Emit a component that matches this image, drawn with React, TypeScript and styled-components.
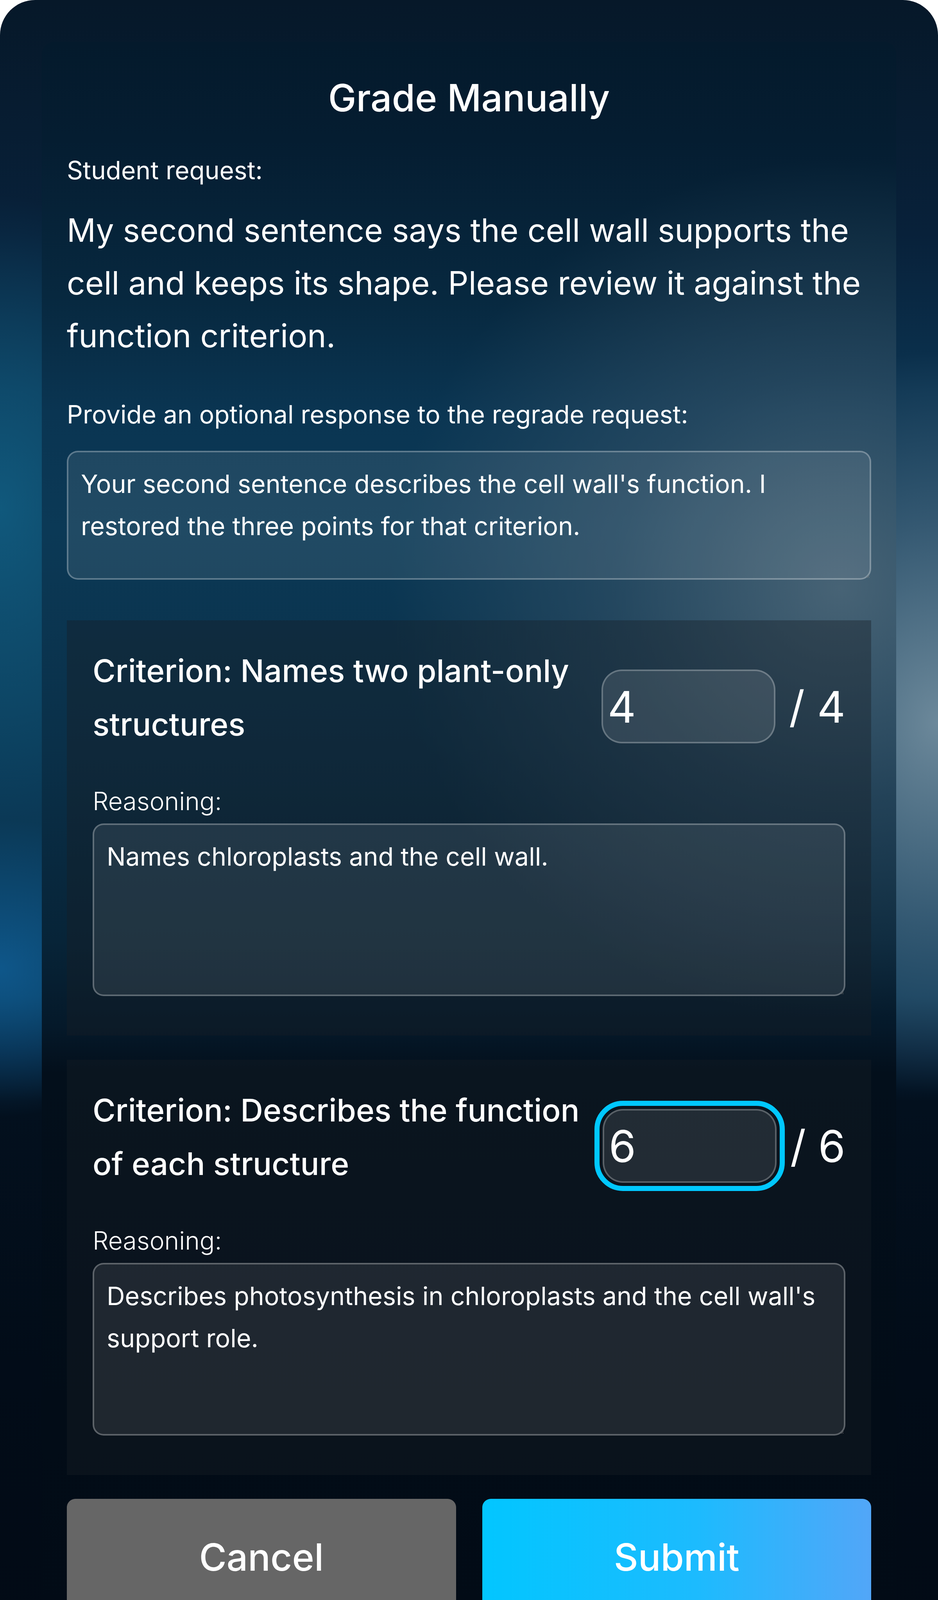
import React from 'react';
import styled, { createGlobalStyle, css } from 'styled-components';

const GlobalStyle = createGlobalStyle`
  html, body {
    margin: 0;
    padding: 0;
    background: #ffffff;
  }
  body {
    font-family: 'Inter', 'Noto Sans', sans-serif;
    -webkit-font-smoothing: antialiased;
  }
  *, *::before, *::after {
    box-sizing: border-box;
  }
`;

const Frame = styled.div`
  min-height: 4314px;
  padding: 107px;
  border-radius: 90px;
  overflow: hidden;
  background:
    radial-gradient(720px 950px at 100% 1850px, rgba(125, 150, 166, 0.85) 0%, rgba(88, 118, 140, 0.52) 55%, rgba(60, 90, 115, 0) 100%),
    radial-gradient(520px 800px at 0% 1300px, rgba(20, 112, 152, 0.6) 0%, rgba(20, 112, 152, 0) 100%),
    radial-gradient(460px 380px at 0% 2480px, rgba(16, 100, 160, 0.7) 0%, rgba(16, 100, 160, 0) 100%),
    linear-gradient(
      180deg,
      #061829 0px,
      #08213a 600px,
      #0b3350 1000px,
      #0b3a57 1800px,
      #0a3755 2550px,
      #06223a 2690px,
      #03101e 2820px,
      #020c18 3500px,
      #020a15 4314px
    );
`;

const Card = styled.div`
  display: flex;
  flex-direction: column;
  border-radius: 32px;
  padding: 86px 64px 69px;
  color: #ffffff;
  background:
    radial-gradient(1150px 1100px at 2040px 1400px, rgba(86, 110, 126, 0.8) 0%, rgba(70, 95, 114, 0.42) 50%, rgba(60, 85, 105, 0) 100%),
    linear-gradient(
      180deg,
      #041a2c 0px,
      #051d31 250px,
      #07283f 650px,
      #0a3552 950px,
      #0b3956 1250px,
      #0a3049 1800px,
      #072438 2300px,
      #05192a 2520px,
      #030f1b 2640px,
      #020c17 3500px,
      #020b16 100%
    );
`;

const Title = styled.h1`
  margin: 0;
  font-size: 96px;
  line-height: 115px;
  font-weight: 500;
  text-align: center;
`;

const Label = styled.div<{ $light?: boolean; $mt: number }>`
  margin-top: ${(p) => p.$mt}px;
  font-size: 64px;
  line-height: 99px;
  font-weight: ${(p) => (p.$light ? 300 : 400)};
  color: #ffffff;
`;

const RequestText = styled.p`
  margin: 37px 0 0;
  font-size: 82px;
  line-height: 135px;
  font-weight: 400;
`;

const TextBox = styled.textarea<{ $h: number; $mt: number }>`
  display: block;
  width: 100%;
  height: ${(p) => p.$h}px;
  margin-top: ${(p) => p.$mt}px;
  padding: 27px 32px;
  border: 4px solid rgba(255, 255, 255, 0.28);
  border-radius: 28px;
  background: rgba(255, 255, 255, 0.085);
  color: #ffffff;
  font-family: inherit;
  font-size: 64.5px;
  line-height: 108px;
  font-weight: 400;
  outline: none;
`;

const Panel = styled.section<{ $mt: number }>`
  margin-top: ${(p) => p.$mt}px;
  padding: 60px 66px 101px;
  background: rgba(22, 30, 38, 0.4);
`;

const PanelHeader = styled.div`
  display: flex;
  align-items: flex-start;
  gap: 16px;
`;

const CriterionTitle = styled.h2`
  flex: 1;
  margin: 0;
  font-size: 80px;
  line-height: 137px;
  font-weight: 500;
`;

const Score = styled.div`
  display: flex;
  align-items: center;
  flex: none;
  margin-top: 66px;
`;

const ScoreInput = styled.input<{ $focused?: boolean }>`
  width: 445px;
  height: 189px;
  padding: 0 12px;
  border: 4px solid rgba(255, 255, 255, 0.25);
  border-radius: 52px;
  background: rgba(255, 255, 255, 0.1);
  color: #ffffff;
  font-family: inherit;
  font-size: 112px;
  font-weight: 400;
  outline: none;
  ${(p) =>
    p.$focused &&
    css`
      outline: 13px solid #00c8ff;
      outline-offset: 8px;
    `}
`;

const ScoreMax = styled.span`
  margin-left: 35px;
  font-size: 112px;
  line-height: 1;
  font-weight: 400;
  white-space: nowrap;
`;

const ButtonRow = styled.div`
  display: grid;
  grid-template-columns: 1fr 1fr;
  gap: 67px;
  margin-top: 61px;
`;

const Button = styled.button<{ $primary?: boolean }>`
  height: 298px;
  border: none;
  border-radius: 22px;
  color: #ffffff;
  font-family: inherit;
  font-size: 96px;
  font-weight: 500;
  cursor: pointer;
  background: ${(p) =>
    p.$primary ? 'linear-gradient(90deg, #02c6ff 0%, #1cbbfe 55%, #52a6f8 100%)' : '#666666'};
`;

type Criterion = {
  title: string;
  score: string;
  max: number;
  reasoning: string;
  focused?: boolean;
  mt: number;
};

const criteria: Criterion[] = [
  {
    title: 'Criterion: Names two plant-only structures',
    score: '4',
    max: 4,
    reasoning: 'Names chloroplasts and the cell wall.',
    mt: 104,
  },
  {
    title: 'Criterion: Describes the function of each structure',
    score: '6',
    max: 6,
    reasoning: "Describes photosynthesis in chloroplasts and the cell wall's support role.",
    focused: true,
    mt: 62,
  },
];

export default function App() {
  return (
    <>
      <GlobalStyle />
      <Frame>
        <Card>
          <Title>Grade Manually</Title>
          <Label $mt={78}>Student request:</Label>
          <RequestText>
            My second sentence says the cell wall supports the cell and keeps its shape. Please review it
            against the function criterion.
          </RequestText>
          <Label $mt={84}>Provide an optional response to the regrade request:</Label>
          <TextBox
            $h={330}
            $mt={44}
            spellCheck={false}
            defaultValue="Your second sentence describes the cell wall's function. I restored the three points for that criterion."
          />
          {criteria.map((c) => (
            <Panel key={c.title} $mt={c.mt}>
              <PanelHeader>
                <CriterionTitle>{c.title}</CriterionTitle>
                <Score>
                  <ScoreInput type="text" defaultValue={c.score} $focused={c.focused} />
                  <ScoreMax>/ {c.max}</ScoreMax>
                </Score>
              </PanelHeader>
              <Label $mt={79} $light>
                Reasoning:
              </Label>
              <TextBox $h={442} $mt={8} spellCheck={false} defaultValue={c.reasoning} />
            </Panel>
          ))}
          <ButtonRow>
            <Button type="button">Cancel</Button>
            <Button type="button" $primary>
              Submit
            </Button>
          </ButtonRow>
        </Card>
      </Frame>
    </>
  );
}
